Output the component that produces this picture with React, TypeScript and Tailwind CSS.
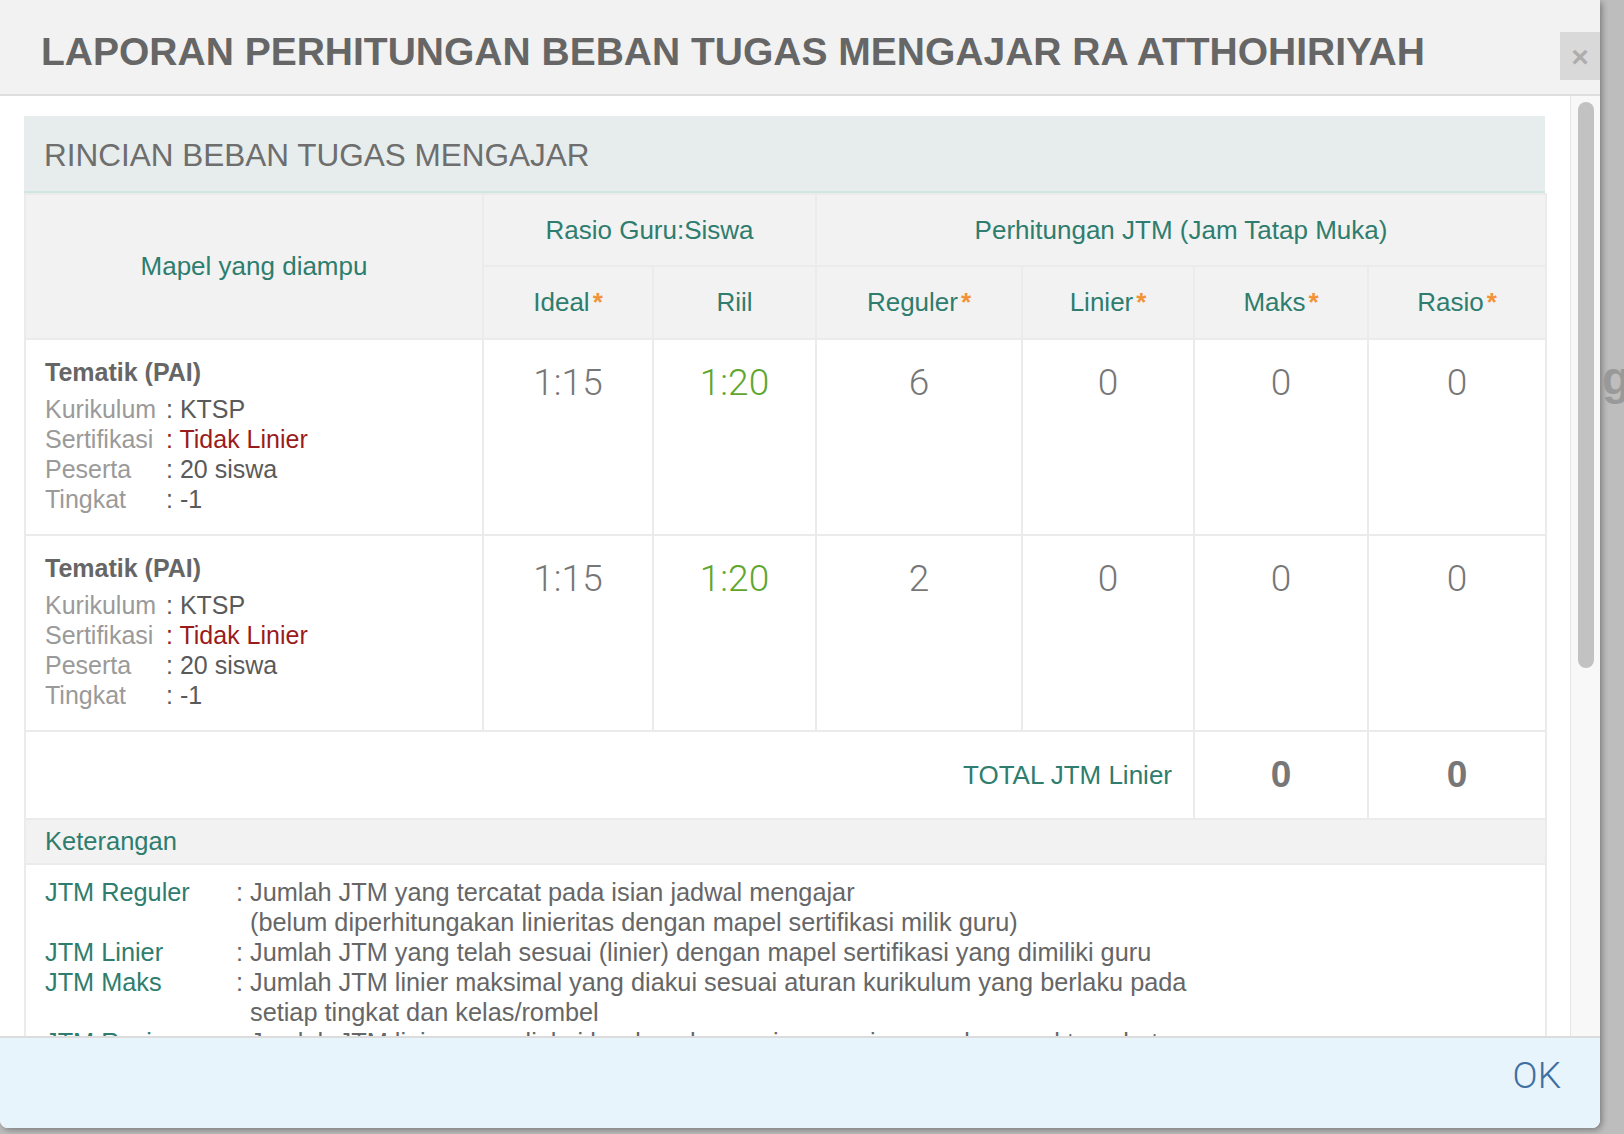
const font = { fontFamily: '"Liberation Sans", Arial, sans-serif' };

interface Mapel {
  nama: string;
  kurikulum: string;
  sertifikasi: string;
  peserta: string;
  tingkat: string;
  ideal: string;
  riil: string;
  reguler: number;
  linier: number;
  maks: number;
  rasio: number;
}

const rows: Mapel[] = [
  { nama: 'Tematik (PAI)', kurikulum: 'KTSP', sertifikasi: 'Tidak Linier', peserta: '20 siswa', tingkat: '-1', ideal: '1:15', riil: '1:20', reguler: 6, linier: 0, maks: 0, rasio: 0 },
  { nama: 'Tematik (PAI)', kurikulum: 'KTSP', sertifikasi: 'Tidak Linier', peserta: '20 siswa', tingkat: '-1', ideal: '1:15', riil: '1:20', reguler: 2, linier: 0, maks: 0, rasio: 0 },
];

const keterangan = [
  { label: 'JTM Reguler', lines: ['Jumlah JTM yang tercatat pada isian jadwal mengajar', '(belum diperhitungakan linieritas dengan mapel sertifikasi milik guru)'] },
  { label: 'JTM Linier', lines: ['Jumlah JTM yang telah sesuai (linier) dengan mapel sertifikasi yang dimiliki guru'] },
  { label: 'JTM Maks', lines: ['Jumlah JTM linier maksimal yang diakui sesuai aturan kurikulum yang berlaku pada', 'setiap tingkat dan kelas/rombel'] },
  { label: 'JTM Rasio', lines: ['Jumlah JTM linier yang diakui berdasarkan rasio guru:siswa pada mapel tersebut'] },
];

function Star() {
  return <span className="text-[#f39237] font-bold ml-[3px]">*</span>;
}

function Num({ value, green }: { value: string | number; green?: boolean }) {
  return (
    <td className="border-2 border-[#ebebeb] align-top text-center pt-[23px]">
      <span
        className={`text-[37px] leading-[40px] ${green ? 'text-[#5fa62e]' : 'text-[#777777]'}`}
        style={{ fontFamily: 'Roboto, "Liberation Sans", sans-serif', fontWeight: 300 }}
      >
        {value}
      </span>
    </td>
  );
}

export default function App() {
  const th = 'border-2 border-[#ebebeb] bg-[#f2f2f2] text-[#2e7d6e] text-[26px] font-normal text-center align-middle';
  return (
    <div className="w-[1624px] h-[1134px] bg-[#bdbdbd] flex overflow-hidden" style={font}>
      <div className="w-[1600px] h-[1128px] shrink-0 bg-white rounded-b-[8px] overflow-hidden flex flex-col shadow-[2px_2px_6px_rgba(0,0,0,0.35)]">
        {/* header */}
        <div className="h-[96px] shrink-0 bg-[#f2f2f2] border-b-2 border-[#dedede] flex justify-between">
          <h1 className="pl-[41px] pt-[32px] text-[39px] leading-none font-bold text-[#666666]">
            LAPORAN PERHITUNGAN BEBAN TUGAS MENGAJAR RA ATTHOHIRIYAH
          </h1>
          <div className="mt-[32px] w-[40px] h-[48px] bg-[#d9d9d9] flex items-center justify-center text-[30px] font-bold text-[#adadad]">
            ×
          </div>
        </div>

        {/* body */}
        <div className="h-[940px] shrink-0 flex overflow-hidden">
          <div className="w-[1570px] pl-[24px] pt-[20px]">
            <div className="w-[1521px]">
              <div className="h-[77px] bg-[#e7eded] border-b-2 border-[#cfe6e3] flex items-center pl-[20px] pt-[5px] text-[31.5px] text-[#6e6e6e]">
                RINCIAN BEBAN TUGAS MENGAJAR
              </div>
              <table className="w-[1521px] table-fixed border-collapse">
                <colgroup>
                  <col className="w-[458px]" />
                  <col className="w-[170px]" />
                  <col className="w-[163px]" />
                  <col className="w-[206px]" />
                  <col className="w-[172px]" />
                  <col className="w-[174px]" />
                  <col className="w-[178px]" />
                </colgroup>
                <thead>
                  <tr className="h-[72px]">
                    <th rowSpan={2} className={th}>Mapel yang diampu</th>
                    <th colSpan={2} className={th}>Rasio Guru:Siswa</th>
                    <th colSpan={4} className={th}>Perhitungan JTM (Jam Tatap Muka)</th>
                  </tr>
                  <tr className="h-[73px]">
                    <th className={th}>Ideal<Star /></th>
                    <th className={th}>Riil</th>
                    <th className={th}>Reguler<Star /></th>
                    <th className={th}>Linier<Star /></th>
                    <th className={th}>Maks<Star /></th>
                    <th className={th}>Rasio<Star /></th>
                  </tr>
                </thead>
                <tbody>
                  {rows.map((r, i) => (
                    <tr key={i} className="h-[196px]">
                      <td className="border-2 border-[#ebebeb] align-top pl-[19px] pt-[17px] text-[25px] leading-[30px]">
                        <div className="font-bold text-[#666666] mb-[7px]">{r.nama}</div>
                        <div className="flex">
                          <span className="w-[121px] text-[#9a9a9a]">Kurikulum</span>
                          <span className="text-[#5a5a5a]">: {r.kurikulum}</span>
                        </div>
                        <div className="flex">
                          <span className="w-[121px] text-[#9a9a9a]">Sertifikasi</span>
                          <span className="text-[#9a1b1b]">: {r.sertifikasi}</span>
                        </div>
                        <div className="flex">
                          <span className="w-[121px] text-[#9a9a9a]">Peserta</span>
                          <span className="text-[#5a5a5a]">: {r.peserta}</span>
                        </div>
                        <div className="flex">
                          <span className="w-[121px] text-[#9a9a9a]">Tingkat</span>
                          <span className="text-[#5a5a5a]">: {r.tingkat}</span>
                        </div>
                      </td>
                      <Num value={r.ideal} />
                      <Num value={r.riil} green />
                      <Num value={r.reguler} />
                      <Num value={r.linier} />
                      <Num value={r.maks} />
                      <Num value={r.rasio} />
                    </tr>
                  ))}
                  <tr className="h-[88px]">
                    <td colSpan={5} className="border-2 border-[#ebebeb] text-right pr-[21px] align-middle text-[26px] text-[#2e7d6e]">
                      TOTAL JTM Linier
                    </td>
                    <td className="border-2 border-[#ebebeb] text-center align-middle text-[37px] font-bold text-[#777777]">0</td>
                    <td className="border-2 border-[#ebebeb] text-center align-middle text-[37px] font-bold text-[#777777]">0</td>
                  </tr>
                  <tr className="h-[45px]">
                    <td colSpan={7} className="border-2 border-[#ebebeb] bg-[#f2f2f2] pl-[19px] align-middle text-[25.5px] text-[#2e7d6e]">
                      Keterangan
                    </td>
                  </tr>
                  <tr>
                    <td colSpan={7} className="border-2 border-[#ebebeb] pl-[19px] pt-[12px] pb-[20px] align-top text-[25.3px] leading-[30px]">
                      {keterangan.map((k) => (
                        <div key={k.label} className="flex">
                          <span className="w-[191px] shrink-0 text-[#2e7d6e]">{k.label}</span>
                          <span className="w-[14px] shrink-0 text-[#666666]">:</span>
                          <div className="text-[#666666]">
                            {k.lines.map((l) => (
                              <div key={l}>{l}</div>
                            ))}
                          </div>
                        </div>
                      ))}
                    </td>
                  </tr>
                </tbody>
              </table>
            </div>
          </div>
          {/* scrollbar */}
          <div className="w-[30px] shrink-0 border-l border-[#e6e6e6] bg-[#f8f8f8] pt-[6px]">
            <div className="ml-[7px] w-[16px] h-[566px] rounded-full bg-[#c2c2c2]" />
          </div>
        </div>

        {/* footer */}
        <div className="flex-1 bg-[#e8f4fc] border-t-2 border-[#dcdcdc] flex items-center justify-end pr-[39px] pb-[16px]">
          <span
            className="text-[37px] leading-none text-[#3f6fa0]"
            style={{ fontFamily: 'Roboto, "Liberation Sans", sans-serif', fontWeight: 300 }}
          >
            OK
          </span>
        </div>
      </div>

      {/* backdrop strip */}
      <div className="flex-1 pt-[355px] overflow-hidden">
        <div className="pl-[2px] text-[46px] font-bold text-[#999999] leading-none">g</div>
      </div>
    </div>
  );
}
